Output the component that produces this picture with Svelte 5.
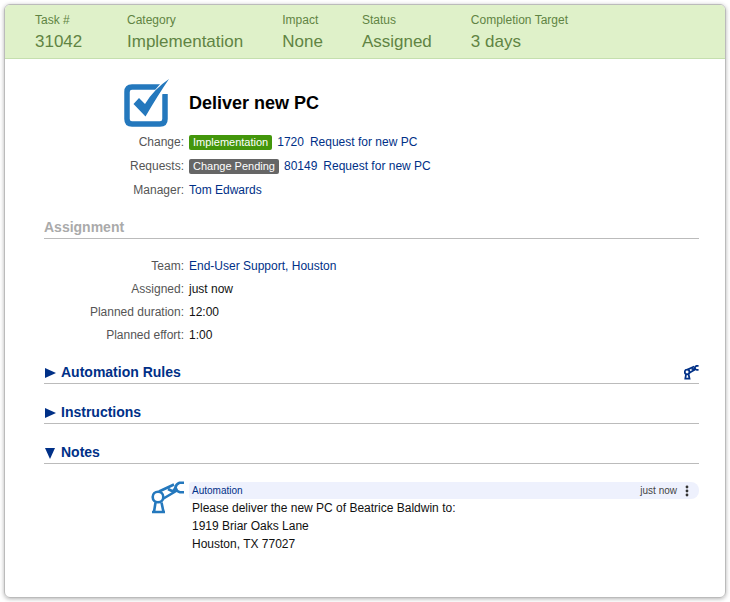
<script lang="ts">
  const summary = [
    { label: 'Task #', value: '31042' },
    { label: 'Category', value: 'Implementation' },
    { label: 'Impact', value: 'None' },
    { label: 'Status', value: 'Assigned' },
    { label: 'Completion Target', value: '3 days' },
  ];

  const relations = [
    { label: 'Change', badge: 'Implementation', color: 'green', id: '1720', text: 'Request for new PC' },
    { label: 'Requests', badge: 'Change Pending', color: 'gray', id: '80149', text: 'Request for new PC' },
    { label: 'Manager', text: 'Tom Edwards' },
  ];

  const assignment = [
    { label: 'Team', value: 'End-User Support, Houston', link: true },
    { label: 'Assigned', value: 'just now' },
    { label: 'Planned duration', value: '12:00' },
    { label: 'Planned effort', value: '1:00' },
  ];

  const notes = [
    {
      author: 'Automation',
      time: 'just now',
      lines: ['Please deliver the new PC of Beatrice Baldwin to:', '1919 Briar Oaks Lane', 'Houston, TX 77027'],
    },
  ];

  let sections = $state([
    { title: 'Automation Rules', open: false, robot: true },
    { title: 'Instructions', open: false, robot: false },
    { title: 'Notes', open: true, robot: false },
  ]);
</script>

{#snippet robotArm()}
  <svg class="robot" viewBox="0 0 34 34" fill="none" stroke="currentColor" aria-hidden="true">
    <circle cx="7" cy="16" r="5.3" />
    <path d="M4.5 21.5 L3 31 H12.5 L10.5 21.5 M1 31 H14" />
    <path d="M8 10.5 L23 3.5 M12.5 17.5 L26 9.5" />
    <path d="M17 8 L22 10.5 L25 6" />
    <path d="M33 1.8 H28.5 Q25 3 24.5 6.5 Q25.5 10.5 29 11.2 H33" />
  </svg>
{/snippet}

<main class="card">
  <dl class="summary">
    {#each summary as item (item.label)}
      <div class="summary-item">
        <dt>{item.label}</dt>
        <dd>{item.value}</dd>
      </div>
    {/each}
  </dl>

  <div class="content">
    <header class="title">
      <svg class="task-icon" viewBox="0 0 48 50" aria-hidden="true">
        <path
          d="M38 9 H8 Q3 9 3 14 V41 Q3 46 8 46 H36 Q41 46 41 41 V16"
          fill="none"
          stroke="currentColor"
          stroke-width="5.5"
        />
        <!-- gap between the box and the tick -->
        <path d="M24 28 Q32 12 45 1 Q38 12 30 25 Z" fill="#fff" stroke="#fff" stroke-width="5" />
        <path d="M9.5 26 L15 20 L21 26 Q30 11 45 1 Q34 17 21.5 38.5 Z" fill="currentColor" />
      </svg>
      <h1>Deliver new PC</h1>
    </header>

    <dl class="fields relations">
      {#each relations as row (row.label)}
        <dt>{row.label}:</dt>
        <dd>
          {#if row.badge}
            <span class="badge {row.color}">{row.badge}</span>
            <a class="id" href="#{row.id}">{row.id}</a>
          {/if}
          <a href="#{row.label}">{row.text}</a>
        </dd>
      {/each}
    </dl>

    <h2 class="static">Assignment</h2>
    <dl class="fields assignment">
      {#each assignment as row (row.label)}
        <dt>{row.label}:</dt>
        <dd>
          {#if row.link}<a href="#team">{row.value}</a>{:else}{row.value}{/if}
        </dd>
      {/each}
    </dl>

    {#each sections as section (section.title)}
      <h2>
        <button class="toggle" aria-expanded={section.open} onclick={() => (section.open = !section.open)}>
          <svg class="arrow" class:open={section.open} viewBox="0 0 12 12" aria-hidden="true">
            <path d="M1 1 L12 6 L1 11 Z" fill="currentColor" />
          </svg>
          {section.title}
        </button>
        {#if section.robot}
          <span class="small-robot">{@render robotArm()}</span>
        {/if}
      </h2>
      {#if section.title === 'Notes' && section.open}
        {#each notes as note}
          <article class="note">
            <div class="avatar">{@render robotArm()}</div>
            <div class="note-main">
              <div class="note-bar">
                <a href="#author">{note.author}</a>
                <span class="time">{note.time}</span>
                <button class="menu" aria-label="Note menu">
                  <svg viewBox="0 0 4 12" aria-hidden="true">
                    <circle cx="2" cy="2" r="1.4" />
                    <circle cx="2" cy="6" r="1.4" />
                    <circle cx="2" cy="10" r="1.4" />
                  </svg>
                </button>
              </div>
              {#each note.lines as line}
                <p>{line}</p>
              {/each}
            </div>
          </article>
        {/each}
      {/if}
    {/each}
  </div>
</main>

<style>
  :global(body) {
    background: #fff;
  }
  .card {
    margin: 4px;
    border: 1px solid #bbb;
    border-radius: 6px;
    box-shadow: 0 1px 4px rgba(0, 0, 0, 0.3);
    overflow: hidden;
    font-family: 'Liberation Sans', Arial, sans-serif;
    font-size: 12px;
    color: #111;
  }
  dl,
  dd,
  h1,
  h2,
  p {
    margin: 0;
  }
  a {
    color: #003087;
    text-decoration: none;
  }
  button {
    padding: 0;
    border: 0;
    background: none;
    font: inherit;
    color: inherit;
    cursor: pointer;
  }
  svg {
    display: block;
  }
  .summary {
    display: flex;
    gap: 39px;
    padding: 6px 30px 3px;
    border-bottom: 1px solid #c5dfae;
    background: #dff1c9;
    color: #5f8443;
  }
  .summary-item:first-child {
    min-width: 53px;
  }
  .summary dt {
    line-height: 18px;
  }
  .summary dd {
    font-size: 17px;
    line-height: 26px;
  }
  .content {
    padding: 19px 26px 44px 39px;
  }
  .title {
    display: flex;
    align-items: center;
    gap: 17px;
    height: 50px;
    padding-left: 80px;
  }
  .task-icon {
    width: 48px;
    height: 50px;
    color: #2478bd;
  }
  h1 {
    font-size: 18px;
    line-height: 24px;
    color: #000;
  }
  .fields {
    display: grid;
    grid-template-columns: 140px 1fr;
    column-gap: 5px;
  }
  .fields dt {
    text-align: right;
    color: #555;
  }
  .relations {
    padding-top: 2px;
    line-height: 24px;
  }
  .relations dd {
    display: flex;
    align-items: center;
  }
  .badge {
    margin-right: 5px;
    padding: 0 4px;
    border-radius: 2px;
    font-size: 11px;
    line-height: 15px;
    color: #fff;
  }
  .green {
    background: #43960b;
  }
  .gray {
    background: #666;
  }
  .id {
    margin-right: 6px;
  }
  .assignment {
    padding-top: 13px;
    line-height: 23px;
  }
  h2 {
    display: flex;
    align-items: center;
    justify-content: space-between;
    height: 21px;
    margin-bottom: 3px;
    padding-top: 15px;
    border-bottom: 1px solid #bbb;
    font-size: 14px;
    line-height: 21px;
    color: #003087;
  }
  .static {
    color: #aaa;
  }
  .toggle {
    display: flex;
    align-items: center;
    gap: 5px;
    font-weight: bold;
  }
  .arrow {
    width: 12px;
    height: 12px;
  }
  .open {
    transform: rotate(90deg);
  }
  .robot {
    width: 100%;
    height: 100%;
    stroke-width: 2.6;
  }
  .small-robot {
    width: 15px;
    height: 15px;
  }
  .small-robot .robot {
    stroke-width: 4;
  }
  .note {
    display: flex;
    gap: 4px;
    padding: 14px 0 0 107px;
  }
  .avatar {
    flex: none;
    width: 34px;
    height: 34px;
    color: #2478bd;
  }
  .note-main {
    flex: 1;
    padding-top: 1px;
  }
  .note-bar {
    display: flex;
    align-items: center;
    padding: 0 10px 0 3px;
    border-radius: 3px 8px 8px 3px;
    background: #eef1fd;
    font-size: 10px;
    line-height: 17px;
  }
  .time {
    margin-left: auto;
    color: #444;
  }
  .menu {
    margin-left: 8px;
  }
  .menu svg {
    width: 4px;
    height: 12px;
    fill: #333;
  }
  .note p {
    padding-left: 3px;
    line-height: 18px;
  }
</style>
